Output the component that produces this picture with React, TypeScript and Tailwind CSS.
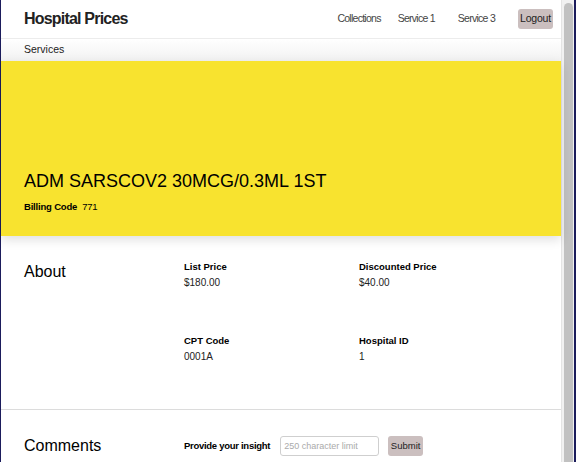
import React from 'react';

const font = { fontFamily: '"Liberation Sans", Arial, sans-serif' };

const details = [
  { label: 'List Price', value: '$180.00' },
  { label: 'Discounted Price', value: '$40.00' },
  { label: 'CPT Code', value: '0001A' },
  { label: 'Hospital ID', value: '1' },
];

export default function App() {
  return (
    <div className="flex h-[462px] w-[576px] overflow-hidden bg-[#1b1c5c] pl-px" style={font}>
      <div className="flex w-[560px] flex-col bg-white text-black">
        {/* Top nav */}
        <header className="flex h-[39px] shrink-0 items-center border-b border-[#ececec] pl-[23px] pr-[8px]">
          <div className="text-[16px] font-bold tracking-[-0.05em] text-[#222]">Hospital Prices</div>
          <nav className="ml-auto flex items-center text-[10.5px] tracking-[-0.07em] text-[#444]">
            <a className="mr-[17px]">Collections</a>
            <a className="mr-[23px]">Service 1</a>
            <a className="mr-[23px]">Service 3</a>
            <button className="h-[20px] w-[35px] rounded-[3px] bg-[#cbbfbf] text-[10.5px] font-medium tracking-[-0.02em] text-[#222]">
              Logout
            </button>
          </nav>
        </header>

        {/* Sub nav */}
        <div className="flex h-[22px] shrink-0 items-center bg-gradient-to-b from-white to-[#f2f2f2] pl-[23px] text-[10.5px] text-[#222]">
          Services
        </div>

        {/* Banner */}
        <section className="relative z-10 flex h-[175px] shrink-0 flex-col justify-end bg-[#f8e32f] pb-[22px] pl-[23px] shadow-[0_4px_10px_rgba(0,0,0,0.12)]">
          <h1 className="text-[18px] leading-[22px] text-black">ADM SARSCOV2 30MCG/0.3ML 1ST</h1>
          <div className="mt-[8px] text-[9.5px] tracking-[-0.02em] text-black">
            <span className="font-bold">Billing Code</span>
            <span className="ml-[5px]">771</span>
          </div>
        </section>

        {/* About */}
        <section className="flex shrink-0 border-b border-[#dcdcdc] pl-[23px] pt-[25px]">
          <h2 className="w-[160px] pt-[2px] text-[16px] leading-[18px]">About</h2>
          <div className="grid w-[350px] grid-cols-2">
            {details.map((d) => (
              <div key={d.label} className="h-[74px]">
                <div className="text-[9.5px] font-bold leading-[12px]">{d.label}</div>
                <div className="mt-[4px] text-[10px] leading-[12px] text-[#222]">{d.value}</div>
              </div>
            ))}
          </div>
        </section>

        {/* Comments */}
        <section className="flex items-center pl-[23px] pt-[26px]">
          <h2 className="w-[160px] text-[16px] leading-[18px]">Comments</h2>
          <label className="text-[9.5px] font-bold tracking-[-0.03em]">Provide your insight</label>
          <input
            className="ml-[10px] h-[20px] w-[99px] rounded-[3px] border border-[#cfcfcf] px-[3px] text-[9px] outline-none placeholder:text-[#aaa]"
            placeholder="250 character limit"
          />
          <button className="ml-[9px] h-[20px] w-[35px] rounded-[3px] bg-[#cbbfbf] text-[9.5px] text-[#222]">
            Submit
          </button>
        </section>
      </div>

      {/* Scrollbar */}
      <div className="flex w-[13px] justify-center border-l border-[#e4e4e4] bg-[#f1f1f1] pt-[3px]">
        <div className="h-[600px] w-[9px] rounded-full bg-[#c1c1c1]" />
      </div>
    </div>
  );
}
